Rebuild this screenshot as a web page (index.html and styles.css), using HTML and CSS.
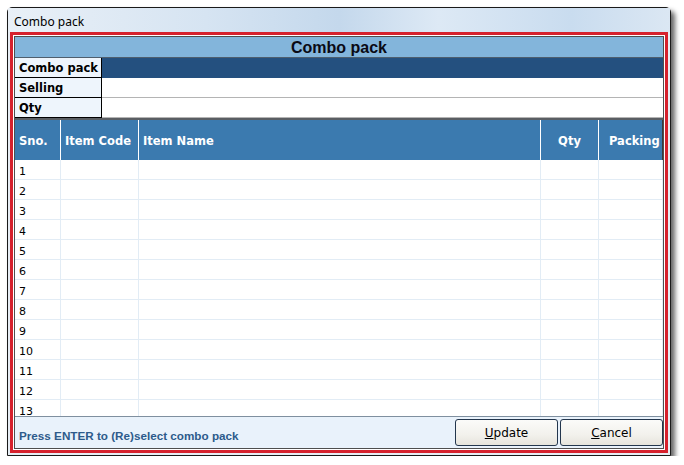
FILE: index.html
```html
<!DOCTYPE html>
<html>
<head>
<meta charset="utf-8">
<link rel="stylesheet" href="styles.css">
</head>
<body>
<div class="window">
  <div class="titlebar">Combo pack</div>
  <div class="frame">
    <div class="inner">
      <div class="head">Combo pack</div>
      <div class="fields">
        <div class="field"><div class="label">Combo pack</div><div class="value dark"></div></div>
        <div class="field"><div class="label">Selling</div><div class="value"></div></div>
        <div class="field"><div class="label">Qty</div><div class="value"></div></div>
      </div>
      <div class="grid">
        <div class="ghead">
          <div class="c c1">Sno.</div>
          <div class="c c2">Item Code</div>
          <div class="c c3">Item Name</div>
          <div class="c c4 center">Qty</div>
          <div class="c c5">Packing</div>
        </div>
        <div class="gbody">
          <div class="row"><div class="c c1">1</div><div class="c c2"></div><div class="c c3"></div><div class="c c4"></div><div class="c c5"></div></div>
          <div class="row"><div class="c c1">2</div><div class="c c2"></div><div class="c c3"></div><div class="c c4"></div><div class="c c5"></div></div>
          <div class="row"><div class="c c1">3</div><div class="c c2"></div><div class="c c3"></div><div class="c c4"></div><div class="c c5"></div></div>
          <div class="row"><div class="c c1">4</div><div class="c c2"></div><div class="c c3"></div><div class="c c4"></div><div class="c c5"></div></div>
          <div class="row"><div class="c c1">5</div><div class="c c2"></div><div class="c c3"></div><div class="c c4"></div><div class="c c5"></div></div>
          <div class="row"><div class="c c1">6</div><div class="c c2"></div><div class="c c3"></div><div class="c c4"></div><div class="c c5"></div></div>
          <div class="row"><div class="c c1">7</div><div class="c c2"></div><div class="c c3"></div><div class="c c4"></div><div class="c c5"></div></div>
          <div class="row"><div class="c c1">8</div><div class="c c2"></div><div class="c c3"></div><div class="c c4"></div><div class="c c5"></div></div>
          <div class="row"><div class="c c1">9</div><div class="c c2"></div><div class="c c3"></div><div class="c c4"></div><div class="c c5"></div></div>
          <div class="row"><div class="c c1">10</div><div class="c c2"></div><div class="c c3"></div><div class="c c4"></div><div class="c c5"></div></div>
          <div class="row"><div class="c c1">11</div><div class="c c2"></div><div class="c c3"></div><div class="c c4"></div><div class="c c5"></div></div>
          <div class="row"><div class="c c1">12</div><div class="c c2"></div><div class="c c3"></div><div class="c c4"></div><div class="c c5"></div></div>
          <div class="row"><div class="c c1">13</div><div class="c c2"></div><div class="c c3"></div><div class="c c4"></div><div class="c c5"></div></div>
        </div>
      </div>
      <div class="status">
        <div class="msg">Press ENTER to (Re)select combo pack</div>
        <div class="buttons">
          <button class="btn"><u>U</u>pdate</button>
          <button class="btn"><u>C</u>ancel</button>
        </div>
      </div>
    </div>
  </div>
</div>
</body>
</html>
```
FILE: styles.css
```css
html, body { margin: 0; padding: 0; background: #ffffff; }
body { font-family: "DejaVu Sans", sans-serif; }

.window {
  margin: 7px 0 0 7px;
  width: 664px;
  height: 449px;
  box-sizing: border-box;
  border: 1px solid #1a1a1a;
  border-radius: 5px 5px 0 0;
  background: #e6edf4;
  box-shadow: 4px 4px 5px rgba(0,0,0,0.6);
  display: flex;
  flex-direction: column;
  padding: 0 2px 2px 2px;
}

.titlebar {
  height: 24px;
  flex: none;
  display: flex;
  align-items: center;
  margin: 0 -2px;
  padding: 2px 0 0 6px;
  box-sizing: border-box;
  font: 12px "Noto Sans", sans-serif;
  color: #000;
  background: linear-gradient(90deg, #e9f0f7 0%, #d6e4f2 30%, #c4d8ec 50%, #dde9f5 65%, #c9dcef 85%, #dbe7f3 100%);
}

.frame {
  flex: 1;
  display: flex;
  border: 3px solid #d6212d;
  padding: 1px;
  background: #ffffff;
  min-height: 0;
}

.inner {
  flex: 1;
  display: flex;
  flex-direction: column;
  border: 1px solid #4e4e4e;
  overflow: hidden;
  background: #ffffff;
}

.head {
  height: 20px;
  flex: none;
  background: #83b5db;
  border-bottom: 1px solid #4f5f6e;
  text-align: center;
  font: bold 16px/21px "Liberation Sans", sans-serif;
  color: #0a0a14;
}

.fields { flex: none; }
.field {
  display: flex;
  height: 20px;
}
.label {
  width: 82px;
  flex: none;
  padding-left: 4px;
  background: #eef5fc;
  border-right: 1px solid #000;
  border-bottom: 1px solid #000;
  font: bold 11.5px/21px "DejaVu Sans", sans-serif;
  color: #000;
}
.value {
  flex: 1;
  border-bottom: 1px solid #b4b4b4;
}
.value.dark {
  background: #24507f;
  border-bottom-color: #24507f;
}

.grid {
  flex: 1;
  display: flex;
  flex-direction: column;
  min-height: 0;
  overflow: hidden;
}
.ghead {
  flex: none;
  display: flex;
  background: #3b7aaf;
  border-top: 2px solid #5a5e63;
  box-sizing: border-box;
  height: 42px;
}
.ghead .c {
  border-right: 1px solid #ffffff;
  color: #ffffff;
  font: bold 11.5px/43px "DejaVu Sans", sans-serif;
  padding-left: 4px;
  white-space: nowrap;
  overflow: hidden;
}
.ghead .c5 { border-right: 1px solid #3a3a3a; padding-left: 10px; }
.ghead .center { text-align: center; padding-left: 0; }

.c { box-sizing: border-box; flex: none; }
.c1 { width: 46px; }
.c2 { width: 78px; }
.c3 { width: 402px; }
.c4 { width: 58px; }
.c5 { flex: 1; }

.gbody { flex: 1; overflow: hidden; }
.row {
  display: flex;
  height: 20px;
  border-bottom: 1px solid #e2ecf5;
  box-sizing: border-box;
}
.row .c {
  border-right: 1px solid #e2ecf5;
  font: 11px/19px "DejaVu Sans", sans-serif;
  color: #000;
  padding-left: 4px;
  padding-top: 2px;
}

.status {
  flex: none;
  height: 31px;
  display: flex;
  align-items: center;
  justify-content: space-between;
  background: #e9f2fb;
  border-top: 1px solid #7f8f9f;
}
.msg {
  padding-left: 4px;
  padding-top: 6px;
  font: bold 11.7px "Liberation Sans", sans-serif;
  color: #2d5b8b;
}
.buttons {
  display: flex;
  gap: 2px;
  align-self: flex-end;
  margin-bottom: 2px;
}
.btn {
  width: 103px;
  height: 27px;
  border: 1px solid #23364d;
  border-radius: 3px;
  background: linear-gradient(180deg, #fbfbf9 0%, #f2f1ec 60%, #e6e4dc 100%);
  font: 12px "DejaVu Sans", sans-serif;
  color: #000;
  padding: 0;
}
.btn u { text-decoration: underline; }
```
